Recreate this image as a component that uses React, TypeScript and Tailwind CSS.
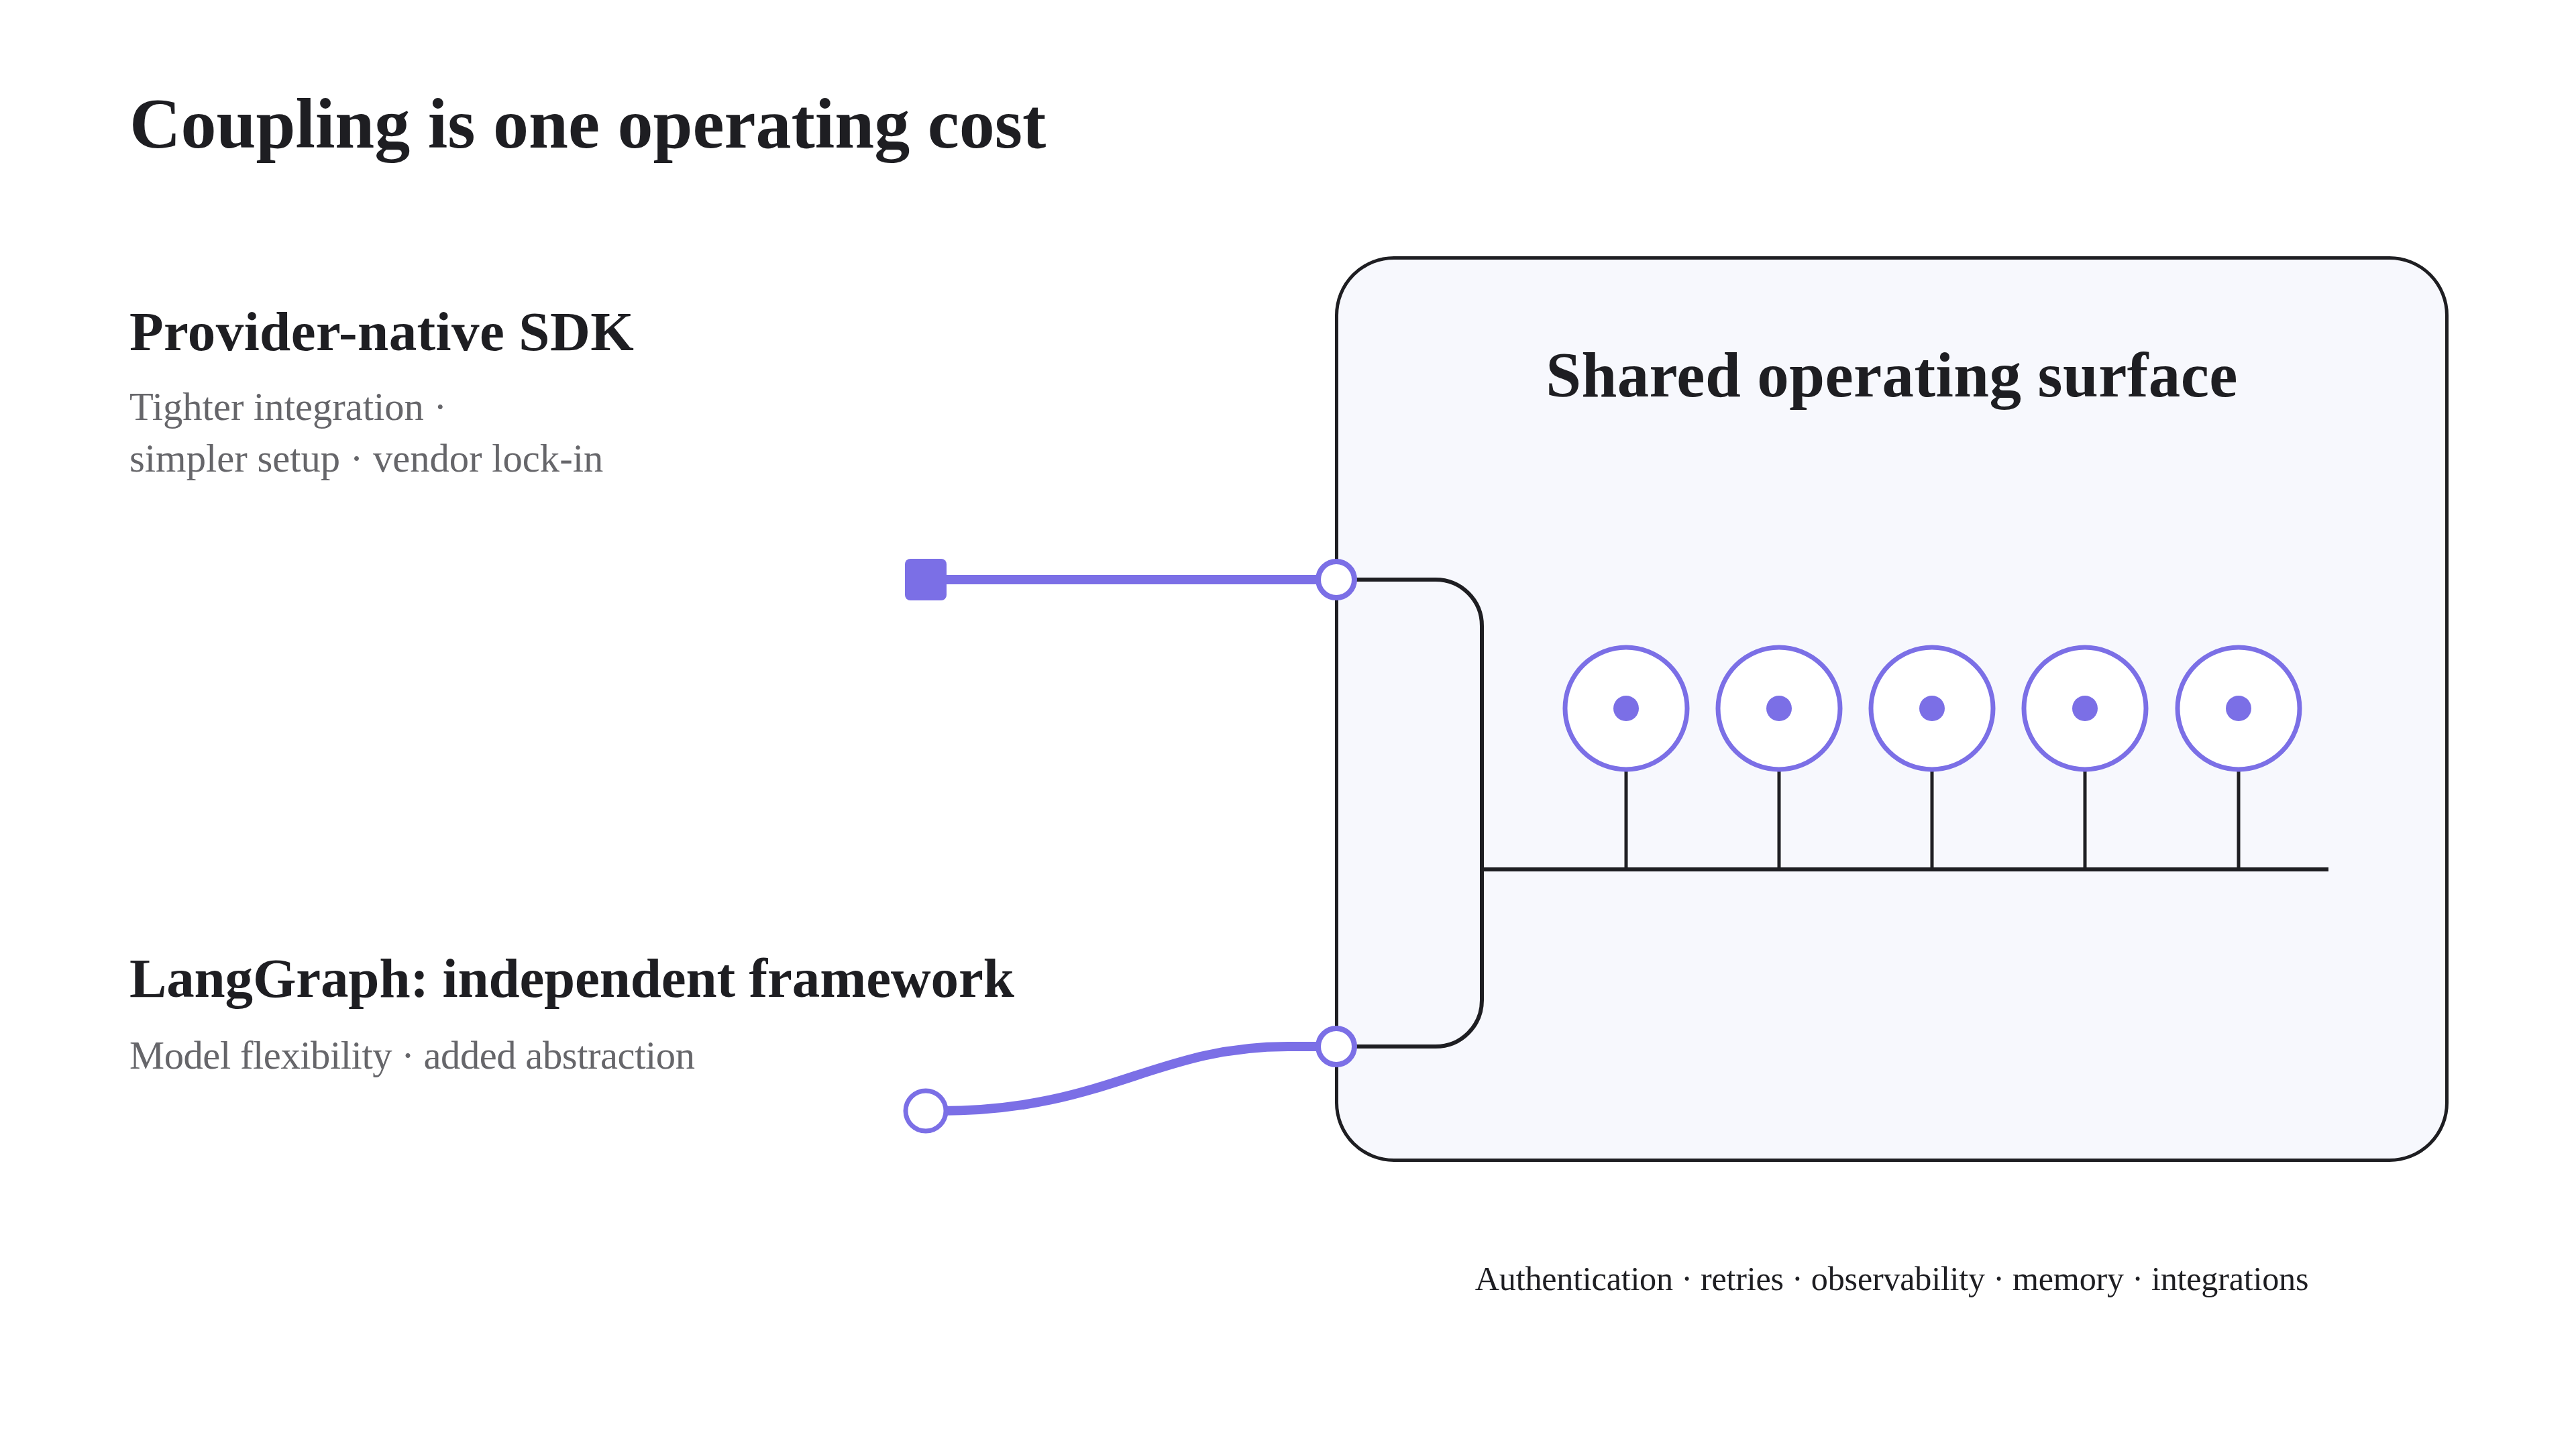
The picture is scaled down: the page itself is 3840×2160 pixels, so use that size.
const INK = "#1e1e22";
const PURPLE = "#7b6fe6";

// x centres of the five service circles
const NODES = [2424, 2652, 2880, 3108, 3337];

function Wires() {
  return (
    <svg
      className="absolute inset-0 w-[3840px] h-[2160px] pointer-events-none"
      viewBox="0 0 3840 2160"
      fill="none"
    >
      {/* Inner bracket and bus */}
      <path
        d="M1992 864 H2140 A69 69 0 0 1 2209 933 V1491 A69 69 0 0 1 2140 1560 H1992"
        stroke={INK}
        strokeWidth={6}
      />
      <path d="M2209 1296 H3471" stroke={INK} strokeWidth={6} />

      {NODES.map((x) => (
        <g key={x}>
          <path d={`M${x} 1148 V1296`} stroke={INK} strokeWidth={5} />
          <circle cx={x} cy={1056} r={91} fill="#fff" stroke={PURPLE} strokeWidth={7} />
          <circle cx={x} cy={1056} r={19} fill={PURPLE} />
        </g>
      ))}

      {/* Provider-native link */}
      <path d="M1380 864 H1992" stroke={PURPLE} strokeWidth={14} />
      <rect x={1349} y={833} width={62} height={62} rx={8} fill={PURPLE} />
      <circle cx={1992} cy={864} r={27} fill="#fff" stroke={PURPLE} strokeWidth={8} />

      {/* LangGraph link */}
      <path
        d="M1400 1656 C1650 1656 1720 1560 1920 1560 H1992"
        stroke={PURPLE}
        strokeWidth={14}
      />
      <circle cx={1380} cy={1656} r={30} fill="#fff" stroke={PURPLE} strokeWidth={7} />
      <circle cx={1992} cy={1560} r={27} fill="#fff" stroke={PURPLE} strokeWidth={8} />
    </svg>
  );
}

export default function App() {
  return (
    <div className="relative w-[3840px] h-[2160px] overflow-hidden bg-white pl-[193px] pt-[132px] font-['Liberation_Serif',serif] text-[#1e1e22]">
      <h1 className="text-[106px] leading-[106px] font-bold">Coupling is one operating cost</h1>

      <div className="flex mt-[144px]">
        {/* Left labels */}
        <div className="w-[1797px] pt-[71px]">
          <h2 className="text-[83px] leading-[83px] font-bold tracking-[0.4px]">Provider-native SDK</h2>
          <p className="mt-[32px] text-[58.6px] leading-[77px] text-[#66666a]">
            Tighter integration ·
            <br />
            simpler setup · vendor lock-in
          </p>
          <h2 className="mt-[695px] text-[83px] leading-[83px] font-bold tracking-[-0.15px]">
            LangGraph: independent framework
          </h2>
          <p className="mt-[35px] text-[58.6px] leading-[77px] text-[#66666a] tracking-[-0.45px]">
            Model flexibility · added abstraction
          </p>
        </div>

        {/* Shared surface */}
        <div className="w-[1660px]">
          <div className="h-[1350px] rounded-[88px] border-[5px] border-[#1e1e22] bg-[#f7f8fd] pt-[125px] text-center">
            <h2 className="text-[95px] leading-[95px] font-bold tracking-[0.4px]">Shared operating surface</h2>
          </div>
          <p className="mt-[144px] text-center text-[50.2px] leading-[60px] tracking-[-0.23px]">
            Authentication · retries · observability · memory · integrations
          </p>
        </div>
      </div>

      <Wires />
    </div>
  );
}
